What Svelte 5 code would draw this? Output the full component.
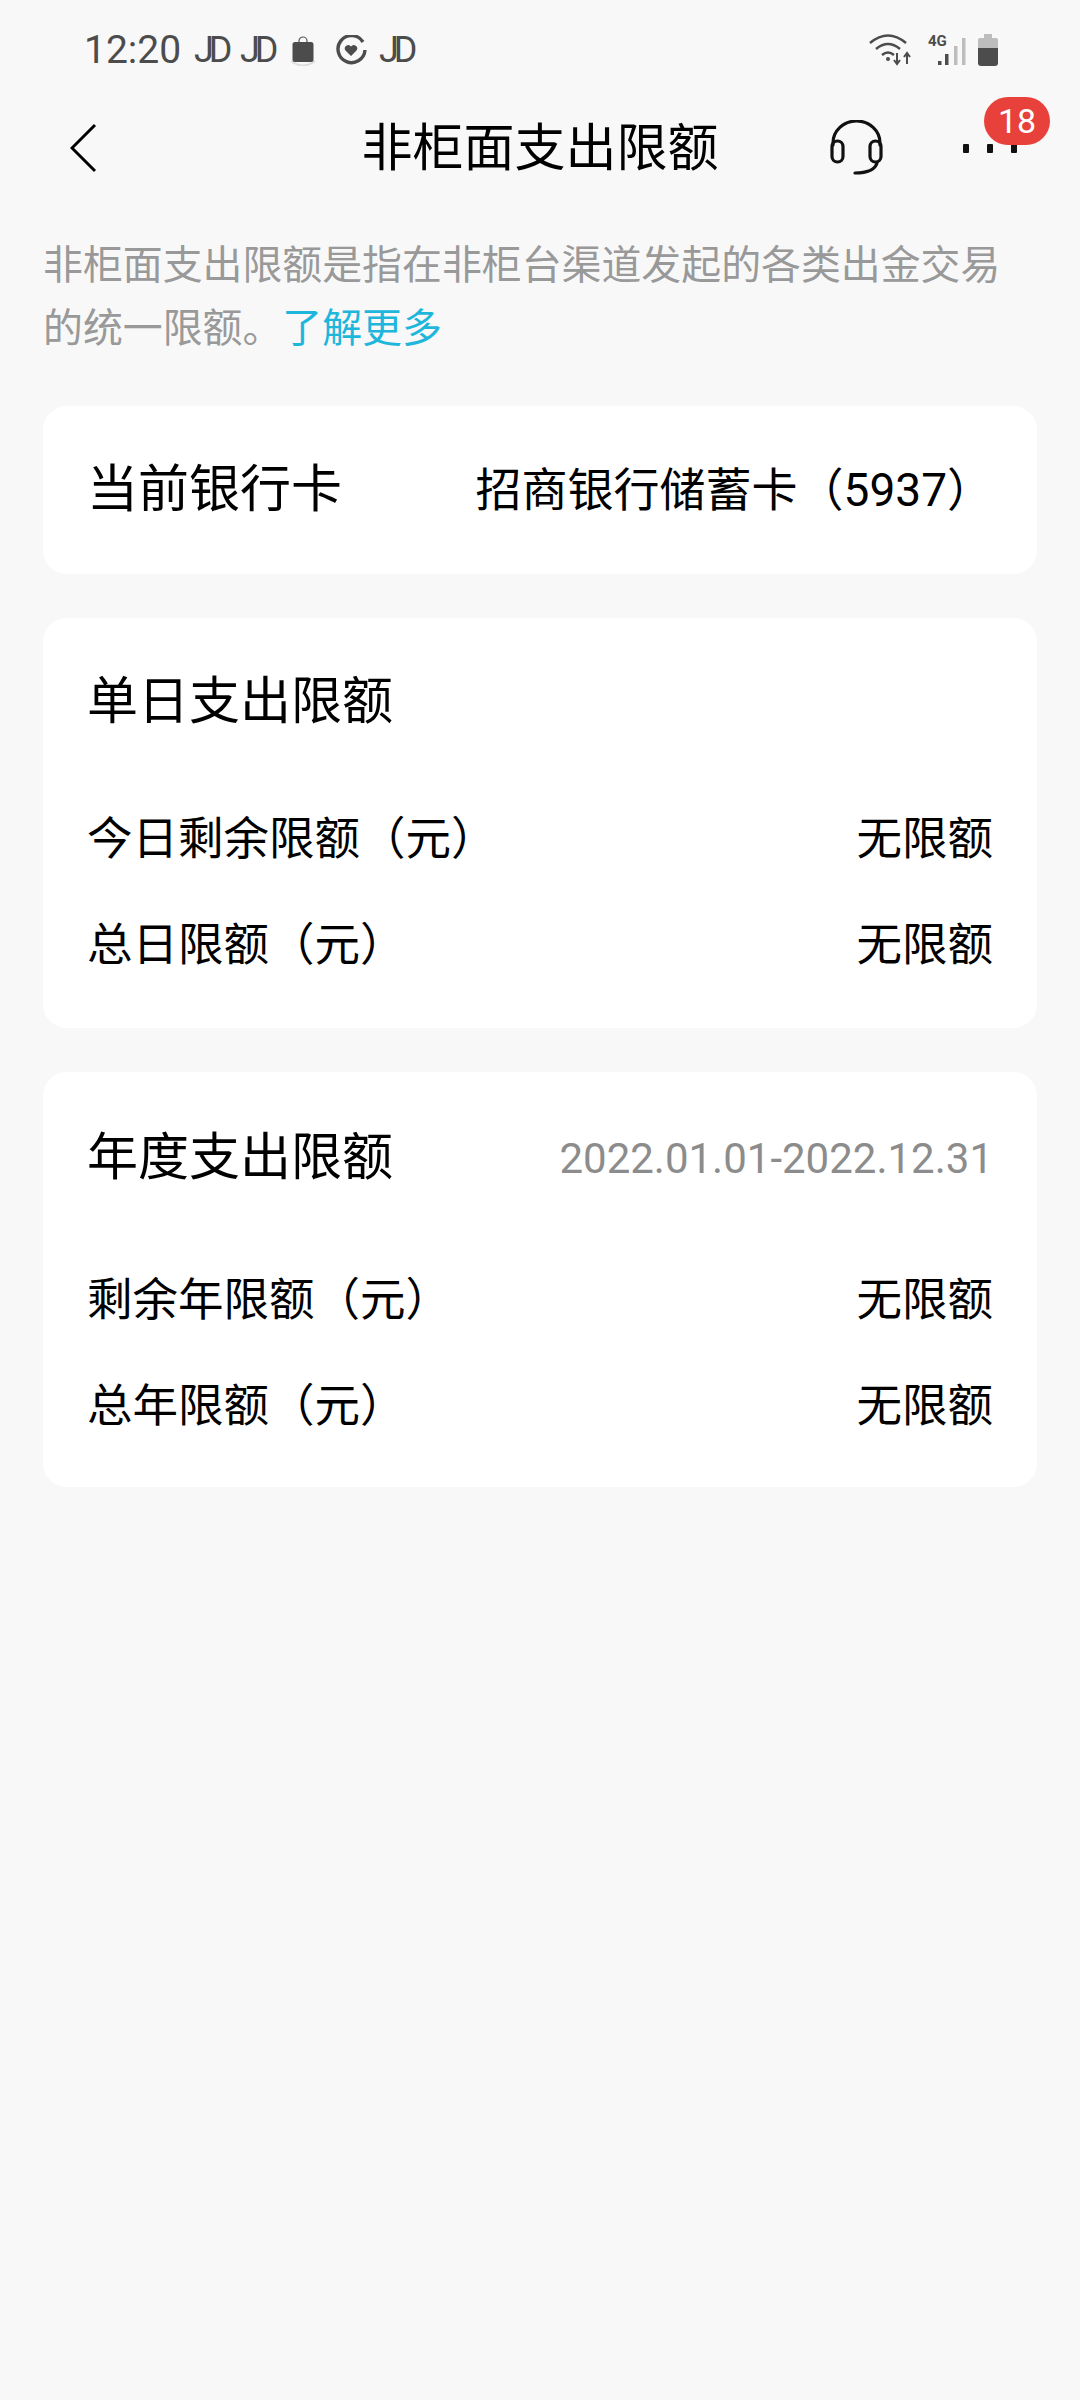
<script>
	const sections = [
		{
			title: '单日支出限额',
			rows: [
				{ label: '今日剩余限额（元）', value: '无限额' },
				{ label: '总日限额（元）', value: '无限额' }
			]
		},
		{
			title: '年度支出限额',
			period: '2022.01.01-2022.12.31',
			rows: [
				{ label: '剩余年限额（元）', value: '无限额' },
				{ label: '总年限额（元）', value: '无限额' }
			]
		}
	];
</script>

<div class="page">
	<div class="status">
		<div class="status-left">
			<span class="time">12:20</span>
			<span class="jd">JD</span>
			<span class="jd">JD</span>
			<svg class="bag" width="26" height="30" viewBox="0 0 26 30">
				<path d="M1 25q12 9 24 0" fill="none" stroke="#dcdcdc" stroke-width="2" />
				<path d="M9 7V5a4 4 0 0 1 8 0v2" fill="none" stroke="#555" stroke-width="1.2" />
				<rect x="2.500" y="6" width="21" height="20" rx="2.500" fill="#4c4c4c" />
			</svg>
			<svg class="care" width="32" height="30" viewBox="0 0 32 30">
				<path d="M28 7A13.500 13.500 0 1 0 30 15" fill="none" stroke="#4c4c4c" stroke-width="3.400" />
				<path d="M16 21l-5.500-5.500a3.400 3.400 0 0 1 5.500-4 3.400 3.400 0 0 1 5.500 4z" fill="#4c4c4c" />
			</svg>
			<span class="jd last">JD</span>
		</div>
		<div class="status-right">
			<svg class="wifi" width="43" height="33" viewBox="0 0 43 33">
				<g fill="none" stroke="#4c4c4c" stroke-width="2.600">
					<path d="M1 10q18-15 36 0" />
					<path d="M7 16q12-10 24 0" />
					<path d="M13 22q6-5 12 0" />
				</g>
				<circle cx="19" cy="26" r="2" fill="#4c4c4c" />
				<path d="M28 20v11m-3-4l3 4 3-4M38 31V20m-3 4l3-4 3 4" fill="none" stroke="#4c4c4c" stroke-width="2" />
			</svg>
			<svg class="signal" width="38" height="33" viewBox="0 0 38 33">
				<text x="0" y="13" class="four-g">4G</text>
				<rect x="10" y="28" width="3.500" height="4" fill="#4c4c4c" />
				<rect x="17" y="21" width="3.500" height="11" fill="#4c4c4c" />
				<rect x="26" y="13" width="3.500" height="19" fill="#bdbdbd" />
				<rect x="34" y="5" width="3.500" height="27" fill="#bdbdbd" />
			</svg>
			<svg class="battery" width="20" height="33" viewBox="0 0 20 33">
				<path d="M6 1h8v4h4a2 2 0 0 1 2 2v8H0V7a2 2 0 0 1 2-2h4z" fill="#bdbdbd" />
				<path d="M0 15h20v15a3 3 0 0 1-3 3H3a3 3 0 0 1-3-3z" fill="#4c4c4c" />
			</svg>
		</div>
	</div>

	<header class="nav">
		<svg class="back" width="27" height="50" viewBox="0 0 27 50">
			<path d="M25 2L2 25l23 23" fill="none" stroke="#000" stroke-width="3" />
		</svg>
		<h1>非柜面支出限额</h1>
		<div class="actions">
			<svg width="53" height="55" viewBox="0 0 53 55">
				<g fill="none" stroke="#111" stroke-width="3.200" stroke-linecap="round">
					<path d="M3 25v-2a23.500 22 0 0 1 47 0v2" />
					<rect x="2" y="21" width="11" height="21" rx="5.500" />
					<rect x="40" y="21" width="11" height="21" rx="5.500" />
					<path d="M47 43q-3 10-22 10" />
				</g>
			</svg>
			<div class="more">
				<i></i><i></i><i></i>
				<span class="badge">18</span>
			</div>
		</div>
	</header>

	<p class="intro">
		非柜面支出限额是指在非柜台渠道发起的各类出金交易的统一限额。<span class="link">了解更多</span>
	</p>

	<section class="card current">
		<span class="heading">当前银行卡</span>
		<span class="bank">招商银行储蓄卡（5937）</span>
	</section>

	{#each sections as section}
		<section class="card" class:yearly={section.period}>
			<div class="card-head">
				<span class="heading">{section.title}</span>
				{#if section.period}
					<span class="period">{section.period}</span>
				{/if}
			</div>
			{#each section.rows as row}
				<div class="row">
					<span>{row.label}</span>
					<span>{row.value}</span>
				</div>
			{/each}
		</section>
	{/each}
</div>

<style>
	:global(body) {
		margin: 0;
		background: #f8f8f8;
	}
	.page {
		min-height: 2400px;
		background: #f8f8f8;
		font-family: Roboto, 'Noto Sans CJK SC', sans-serif;
		color: #000;
		overflow: hidden;
	}
	.status {
		display: flex;
		justify-content: space-between;
		align-items: center;
		height: 33px;
		padding: 33px 82px 0 84px;
		color: #4c4c4c;
	}
	.status-left,
	.status-right {
		display: flex;
		align-items: center;
	}
	.signal {
		margin-left: 16px;
	}
	.battery {
		margin-left: 12px;
	}
	.time {
		font-size: 39px;
		line-height: 33px;
		width: 110px;
		padding-top: 1px;
	}
	.jd {
		font-size: 36px;
		line-height: 33px;
		letter-spacing: -5px;
		width: 46px;
		padding-top: 1px;
	}
	.jd.last {
		width: auto;
	}
	.bag {
		margin: 3px 19px 0 4px;
	}
	.care {
		margin-right: 12px;
	}
	.four-g {
		font-size: 15px;
		font-weight: 700;
		fill: #4c4c4c;
		font-family: Roboto, sans-serif;
	}
	.nav {
		display: grid;
		grid-template-columns: 1fr auto 1fr;
		align-items: center;
		height: 70px;
		margin-top: 44px;
		padding: 0 60px;
	}
	.back {
		margin-left: 10px;
		margin-top: 2px;
	}
	.nav h1 {
		margin: 4px 0 0;
		font-size: 51px;
		font-weight: 400;
		line-height: 70px;
	}
	.actions {
		display: flex;
		justify-content: flex-end;
		align-items: center;
		gap: 80px;
		margin-right: 3px;
	}
	.more {
		position: relative;
		display: flex;
		gap: 18px;
		padding-top: 2px;
	}
	.more i {
		display: block;
		width: 6px;
		height: 9px;
		border-radius: 1px;
		background: #111;
	}
	.badge {
		position: absolute;
		left: 21px;
		top: -45px;
		width: 66px;
		height: 48px;
		border-radius: 24px;
		background: #e8403a;
		color: #fff;
		font-size: 34px;
		line-height: 48px;
		text-align: center;
	}
	.intro {
		margin: 0;
		padding: 54px 43px 0;
		font-size: 39.900px;
		line-height: 63px;
		color: #999;
	}
	.link {
		color: #1fb6dc;
	}
	.card {
		margin: 44px 43px 0;
		padding: 0 44px 29px;
		background: #fff;
		border-radius: 24px;
	}
	.current {
		display: flex;
		justify-content: space-between;
		align-items: center;
		height: 168px;
		margin-top: 46px;
		padding-bottom: 0;
	}
	.heading {
		font-size: 51px;
		line-height: 60px;
	}
	.bank {
		font-size: 46px;
		line-height: 60px;
		white-space: nowrap;
	}
	.card-head {
		display: flex;
		justify-content: space-between;
		align-items: center;
		padding: 54px 0 55px;
	}
	.yearly {
		padding-bottom: 27px;
	}
	.yearly .card-head {
		padding: 56px 0 60px;
	}
	.period {
		font-size: 42px;
		color: #8c8c8c;
	}
	.row {
		display: flex;
		justify-content: space-between;
		font-size: 45.500px;
		line-height: 106px;
		height: 106px;
	}
</style>
